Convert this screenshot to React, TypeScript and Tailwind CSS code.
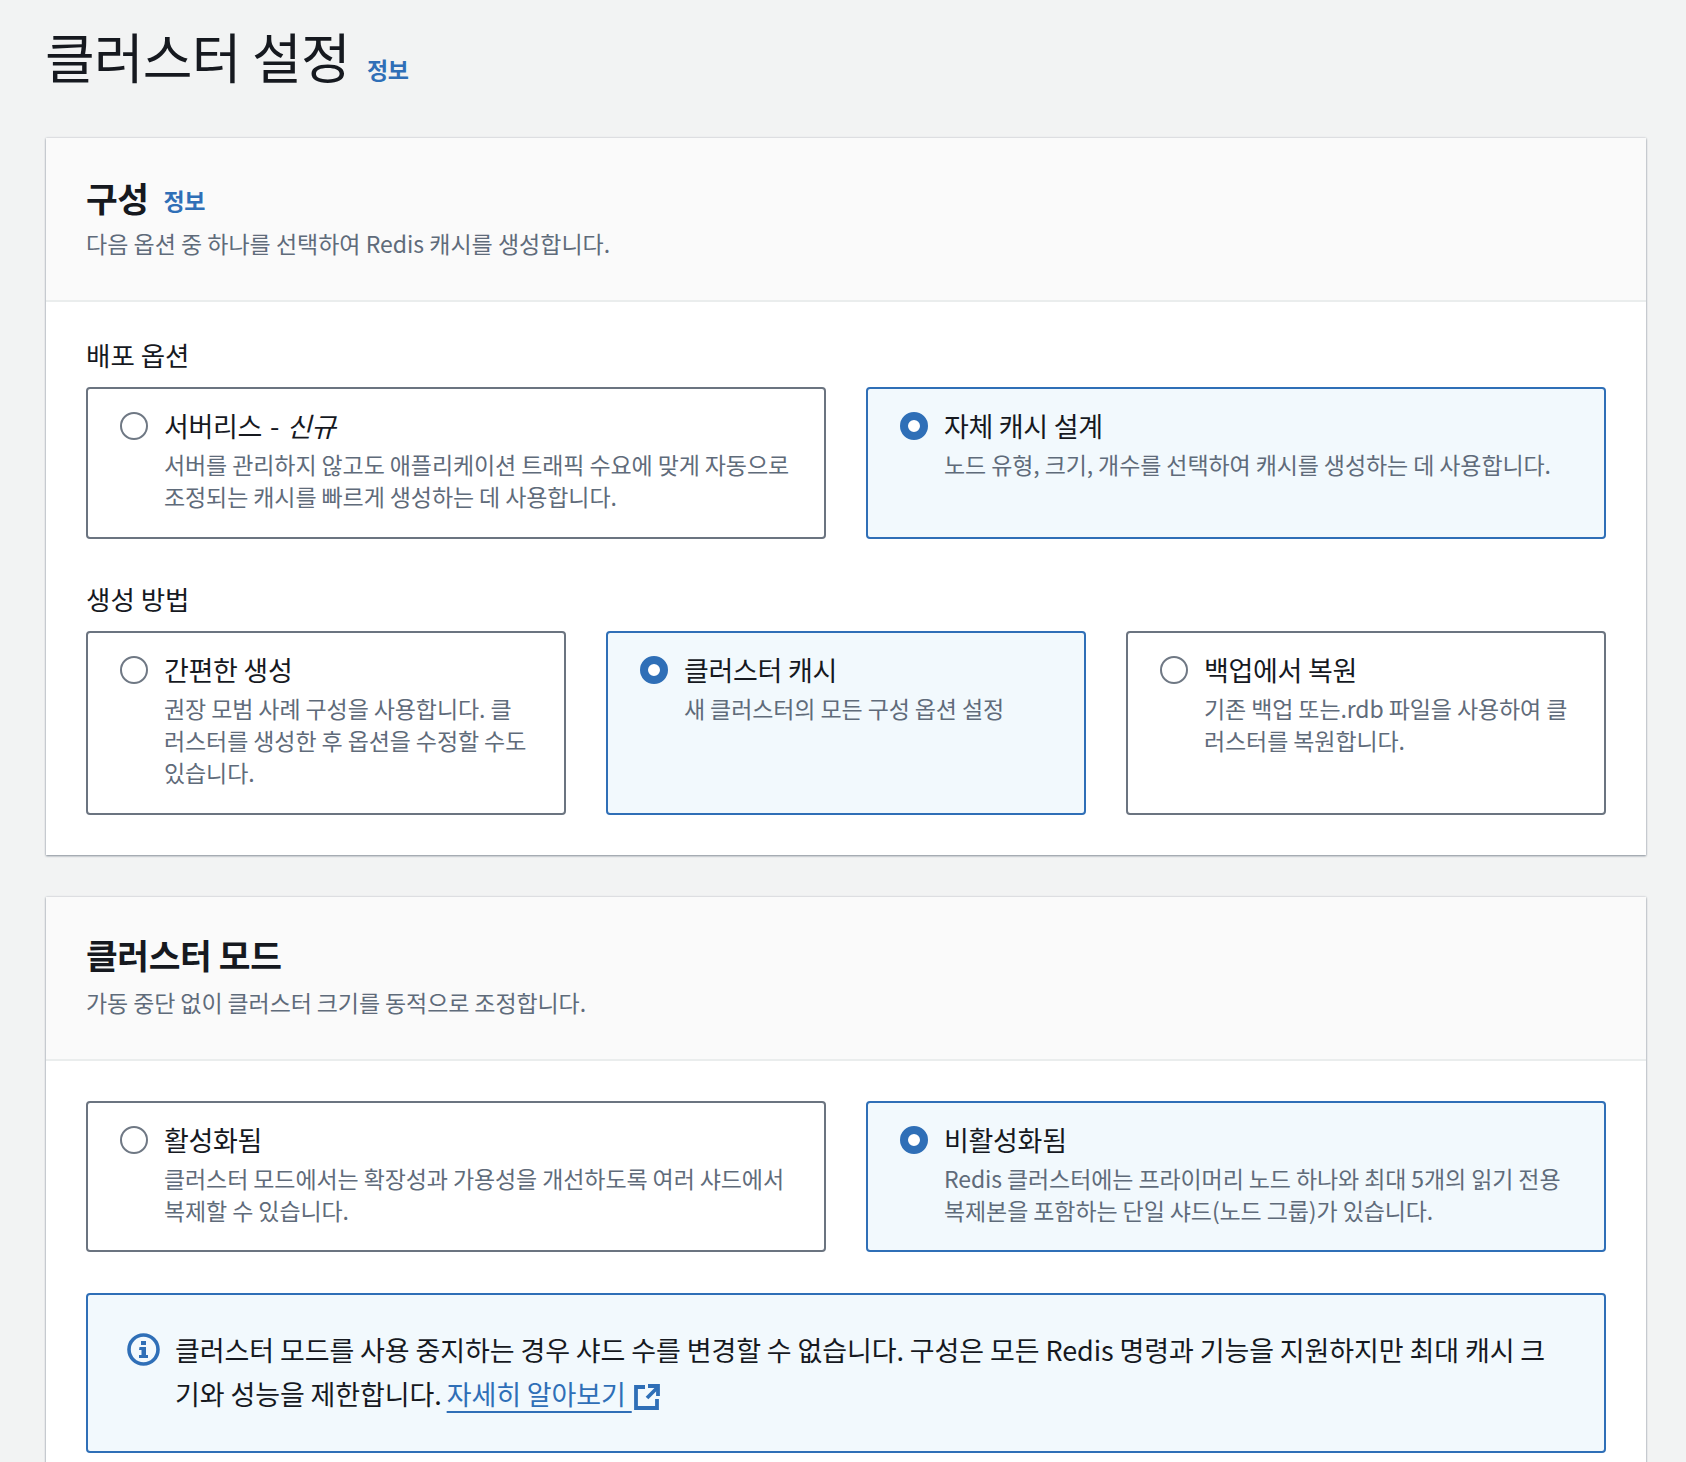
const fontStack = { fontFamily: '"Noto Sans CJK KR", "Noto Sans", sans-serif' }

type OptionProps = {
	title: React.ReactNode
	lines: string[]
	selected?: boolean
}

function Radio({ selected }: { selected?: boolean }) {
	if (selected) {
		return <span className="mt-[4px] size-[28px] shrink-0 rounded-full border-[8px] border-[#2f6fb7] bg-white" />
	}
	return <span className="mt-[4px] size-[28px] shrink-0 rounded-full border-2 border-[#6f7884] bg-white" />
}

function OptionCard({ title, lines, selected }: OptionProps) {
	return (
		<div
			className={
				selected
					? "flex gap-[16px] rounded-[4px] border-2 border-[#2f6fb7] bg-[#f2f9fd] pl-[32px] pr-[20px] pt-[19px] pb-[24.5px]"
					: "flex gap-[16px] rounded-[4px] border-2 border-[#6b7480] bg-white pl-[32px] pr-[20px] pt-[19px] pb-[24.5px]"
			}
		>
			<Radio selected={selected} />
			<div className="min-w-0">
				<div className="h-[36px] whitespace-nowrap text-[27px] leading-[36px] tracking-[-0.3px] text-[#16191f]">{title}</div>
				<div className="mt-[4px] text-[23px] leading-[32px] tracking-[-0.1px] text-[#5f6b7a]">
					{lines.map((line) => (
						<div
							key={line}
							className="whitespace-nowrap"
						>
							{line}
						</div>
					))}
				</div>
			</div>
		</div>
	)
}

function InfoLink() {
	return <span className="ml-[15px] text-[23px] font-bold text-[#2f6fb7] tracking-[-0.4px]">정보</span>
}

function ExternalIcon() {
	return (
		<svg
			viewBox="0 0 28 28"
			className="ml-[1px] inline-block size-[28px] align-[-6px]"
			fill="none"
			stroke="#2f6fb7"
			strokeWidth="3.8"
		>
			<path d="M12 4H3v21h21v-9" />
			<path d="M14 15 24 5" />
			<path d="M15 3h10v10" />
		</svg>
	)
}

function InfoIcon() {
	return (
		<svg
			viewBox="0 0 33 33"
			className="mt-[5px] size-[33px] shrink-0"
		>
			<circle
				cx="16.5"
				cy="16.5"
				r="14.5"
				fill="none"
				stroke="#2f6fb7"
				strokeWidth="3.6"
			/>
			<rect
				x="14"
				y="8"
				width="5"
				height="4"
				fill="#2f6fb7"
			/>
			<path
				d="M12.500 14h6.500v8h2v3h-9v-3h2.500v-5h-2.500z"
				fill="#2f6fb7"
			/>
		</svg>
	)
}

export default function App() {
	return (
		<div
			className="h-[1462px] overflow-hidden bg-[#f2f3f3] pl-[46px] pr-[40px] text-[#16191f]"
			style={fontStack}
		>
			{/* PAGE TITLE */}
			<div className="-ml-[1px] flex h-[138px] items-start pt-[22px]">
				<h1 className="text-[54px] leading-[68px] tracking-[-0.75px] text-[#16191f]">클러스터 설정</h1>
				<span className="ml-[2px] mt-[30px]">
					<InfoLink />
				</span>
			</div>

			{/* CONFIGURATION */}
			<section className="bg-white shadow-[0_1px_2px_#8a929c,0_0_2px_#c4c8cc]">
				<div className="h-[164px] border-b-2 border-[#eaeded] bg-[#fafafa] px-[40px] pt-[37px]">
					<div className="flex h-[44px] items-center">
						<h2 className="text-[34.5px] font-bold leading-[44px] tracking-[-0.5px]">구성</h2>
						<span className="mt-[6px]">
							<InfoLink />
						</span>
					</div>
					<p className="mt-[8px] text-[23px] leading-[32px] tracking-[0px] text-[#5f6b7a]">
						다음 옵션 중 하나를 선택하여 Redis 캐시를 생성합니다.
					</p>
				</div>
				<div className="px-[40px] pt-[37px] pb-[40px]">
					<div className="mb-[16px] text-[26.5px] leading-[32px] tracking-[0px]">배포 옵션</div>
					<div className="grid grid-cols-2 gap-[40px]">
						<OptionCard
							title={
								<span className="[word-spacing:2px]">
									서버리스 - <em>신규</em>
								</span>
							}
							lines={["서버를 관리하지 않고도 애플리케이션 트래픽 수요에 맞게 자동으로", "조정되는 캐시를 빠르게 생성하는 데 사용합니다."]}
						/>
						<OptionCard
							title="자체 캐시 설계"
							lines={["노드 유형, 크기, 개수를 선택하여 캐시를 생성하는 데 사용합니다."]}
							selected
						/>
					</div>
					<div className="mt-[44.5px] mb-[16px] text-[26.5px] leading-[32px] tracking-[0px]">생성 방법</div>
					<div className="grid grid-cols-3 gap-[40px]">
						<OptionCard
							title="간편한 생성"
							lines={["권장 모범 사례 구성을 사용합니다. 클", "러스터를 생성한 후 옵션을 수정할 수도", "있습니다."]}
						/>
						<OptionCard
							title="클러스터 캐시"
							lines={["새 클러스터의 모든 구성 옵션 설정"]}
							selected
						/>
						<OptionCard
							title="백업에서 복원"
							lines={["기존 백업 또는.rdb 파일을 사용하여 클", "러스터를 복원합니다."]}
						/>
					</div>
				</div>
			</section>

			{/* CLUSTER MODE */}
			<section className="mt-[42px] bg-white pb-[60px] shadow-[0_1px_2px_#8a929c,0_0_2px_#c4c8cc]">
				<div className="h-[164px] border-b-2 border-[#eaeded] bg-[#fafafa] px-[40px] pt-[35px]">
					<h2 className="h-[44px] text-[34.5px] font-bold leading-[44px] tracking-[-0.4px]">클러스터 모드</h2>
					<p className="mt-[10px] text-[23px] leading-[32px] tracking-[-0.1px] text-[#5f6b7a]">
						가동 중단 없이 클러스터 크기를 동적으로 조정합니다.
					</p>
				</div>
				<div className="px-[40px] pt-[40px]">
					<div className="grid grid-cols-2 gap-[40px]">
						<OptionCard
							title="활성화됨"
							lines={["클러스터 모드에서는 확장성과 가용성을 개선하도록 여러 샤드에서", "복제할 수 있습니다."]}
						/>
						<OptionCard
							title="비활성화됨"
							lines={["Redis 클러스터에는 프라이머리 노드 하나와 최대 5개의 읽기 전용", "복제본을 포함하는 단일 샤드(노드 그룹)가 있습니다."]}
							selected
						/>
					</div>
					<div className="mt-[41px] flex gap-[15px] rounded-[4px] border-2 border-[#2f6fb7] bg-[#f2f9fd] pl-[39px] pr-[20px] pt-[33px] pb-[35px]">
						<InfoIcon />
						<div className="text-[27px] leading-[44px] tracking-[-0.1px] text-[#16191f]">
							<div className="whitespace-nowrap">
								클러스터 모드를 사용 중지하는 경우 샤드 수를 변경할 수 없습니다. 구성은 모든 Redis 명령과 기능을 지원하지만 최대 캐시 크
							</div>
							<div className="whitespace-nowrap">
								기와 성능을 제한합니다.{" "}
								<span className="-ml-[1px] text-[#2f6fb7] underline decoration-2 underline-offset-[6px]">자세히 알아보기 </span>
								<ExternalIcon />
							</div>
						</div>
					</div>
				</div>
			</section>
		</div>
	)
}
